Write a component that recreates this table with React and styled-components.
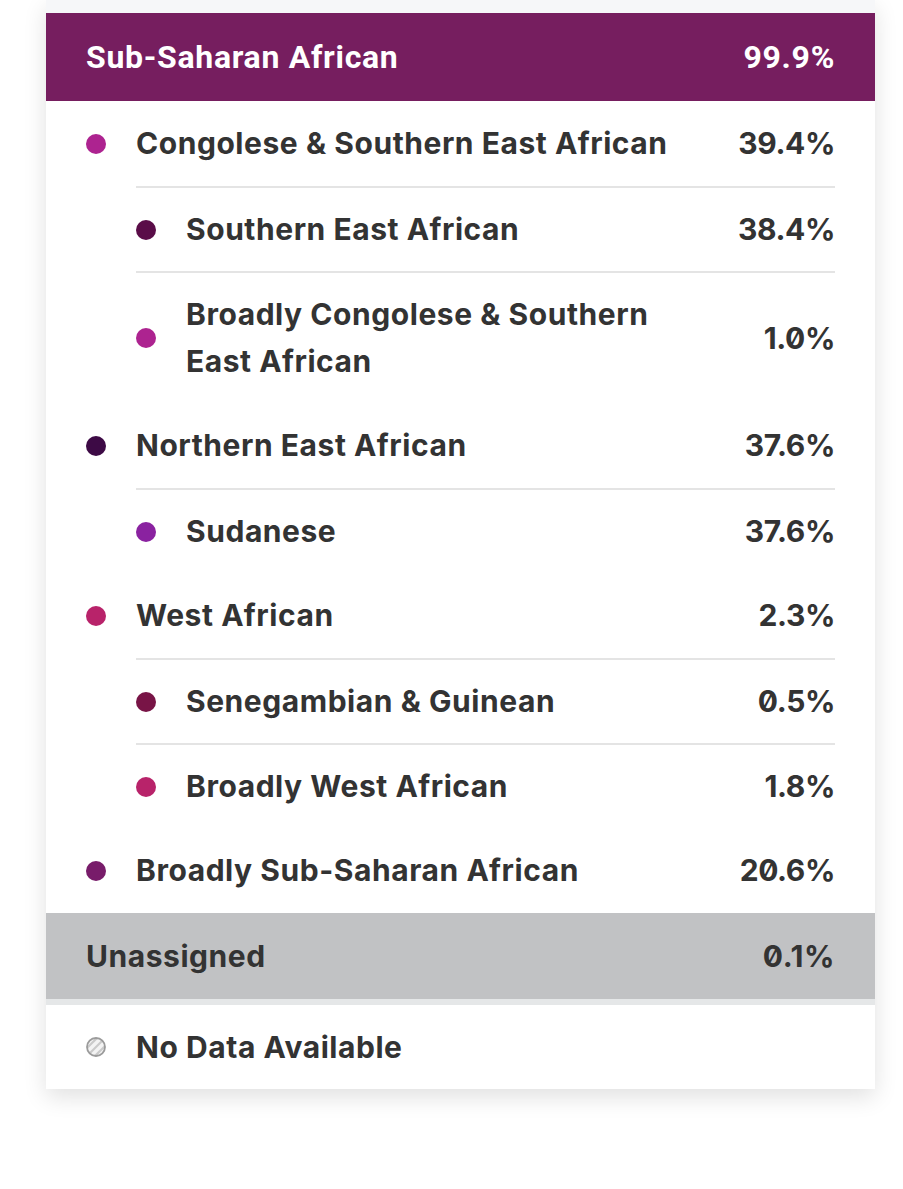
import React from "react";
import styled, { createGlobalStyle } from "styled-components";

const Global = createGlobalStyle`
  html, body { margin: 0; padding: 0; background: #ffffff; }
  body { font-family: Inter, "Open Sans", sans-serif; }
`;

const Page = styled.div`
  padding: 0 28px 100px 46px;
`;

const Card = styled.div`
  width: 829px;
  background: #ffffff;
  box-shadow: 0 8px 22px rgba(0, 0, 0, 0.12);
`;

const TopStrip = styled.div`
  height: 13px;
  background: #f6f7f9;
`;

const Header = styled.div`
  height: 88px;
  background: #761e5f;
  color: #ffffff;
  display: flex;
  align-items: center;
  justify-content: space-between;
  padding: 0 40px;
  font-family: Roboto, "Liberation Sans", sans-serif;
  font-weight: 700;
  font-size: 32px;
  letter-spacing: 0.7px;
`;

const Body = styled.div`
  padding: 0 40px;
`;

const Row = styled.div`
  display: flex;
  align-items: center;
  padding: ${(p) => (p.$child ? "18px 0" : "19px 0")};
  border-top: ${(p) => (p.$child ? "2px solid #e4e4e4" : "none")};
  margin-left: ${(p) => (p.$child ? "50px" : "0")};
  color: #333333;
  font-weight: 700;
  font-size: 30px;
  line-height: 47px;
  letter-spacing: 0.55px;
  font-feature-settings: "zero" 1;
`;

const Dot = styled.span`
  flex: 0 0 20px;
  width: 20px;
  height: 20px;
  border-radius: 50%;
  background: ${(p) => p.$color};
  margin-right: 30px;
`;

const Label = styled.span`
  flex: 1;
  padding-right: 60px;
`;

const Pct = styled.span`
  flex: 0 0 auto;
  text-align: right;
  letter-spacing: -0.4px;
`;

const Unassigned = styled.div`
  height: 86px;
  background: #c1c2c4;
  display: flex;
  align-items: center;
  justify-content: space-between;
  padding: 0 40px;
  color: #333333;
  font-weight: 700;
  font-size: 30px;
  letter-spacing: 0.55px;
  font-feature-settings: "zero" 1;
`;

const Gap = styled.div`
  height: 6px;
  background: #e5e7e8;
`;

const NoDataRow = styled.div`
  height: 84px;
  display: flex;
  align-items: center;
  padding: 0 40px;
  color: #333333;
  font-weight: 700;
  font-size: 30px;
  letter-spacing: 0.55px;
`;

const IconWrap = styled.span`
  display: inline-flex;
  width: 20px;
  height: 20px;
  margin-right: 30px;
`;

const NoDataIcon = () => (
  <IconWrap>
    <svg width="20" height="20" viewBox="0 0 20 20">
      <defs>
        <clipPath id="c">
          <circle cx="10" cy="10" r="9" />
        </clipPath>
      </defs>
      <circle cx="10" cy="10" r="9" fill="#f3f3f3" />
      <g clipPath="url(#c)" stroke="#cacaca" strokeWidth="2.2">
        <line x1="-2" y1="14" x2="14" y2="-2" />
        <line x1="2" y1="18" x2="18" y2="2" />
        <line x1="6" y1="22" x2="22" y2="6" />
      </g>
      <circle cx="10" cy="10" r="9" fill="none" stroke="#9b9b9b" strokeWidth="1.8" />
    </svg>
  </IconWrap>
);

const groups = [
  {
    name: "Congolese & Southern East African",
    pct: "39.4%",
    color: "#ad2390",
    children: [
      { name: "Southern East African", pct: "38.4%", color: "#5a0d48" },
      {
        name: "Broadly Congolese & Southern East African",
        pct: "1.0%",
        color: "#ad2390",
      },
    ],
  },
  {
    name: "Northern East African",
    pct: "37.6%",
    color: "#3d0a45",
    children: [{ name: "Sudanese", pct: "37.6%", color: "#8a22a0" }],
  },
  {
    name: "West African",
    pct: "2.3%",
    color: "#b8236a",
    children: [
      { name: "Senegambian & Guinean", pct: "0.5%", color: "#781446" },
      { name: "Broadly West African", pct: "1.8%", color: "#b8236a" },
    ],
  },
  {
    name: "Broadly Sub-Saharan African",
    pct: "20.6%",
    color: "#781c6a",
    children: [],
  },
];

export default function App() {
  return (
    <>
      <Global />
      <Page>
        <Card>
          <TopStrip />
          <Header>
            <span>Sub-Saharan African</span>
            <span>99.9%</span>
          </Header>
          <Body>
            {groups.map((g) => (
              <React.Fragment key={g.name}>
                <Row>
                  <Dot $color={g.color} />
                  <Label>{g.name}</Label>
                  <Pct>{g.pct}</Pct>
                </Row>
                {g.children.map((c) => (
                  <Row $child key={c.name}>
                    <Dot $color={c.color} />
                    <Label>{c.name}</Label>
                    <Pct>{c.pct}</Pct>
                  </Row>
                ))}
              </React.Fragment>
            ))}
          </Body>
          <Unassigned>
            <span>Unassigned</span>
            <span>0.1%</span>
          </Unassigned>
          <Gap />
          <NoDataRow>
            <NoDataIcon />
            <span>No Data Available</span>
          </NoDataRow>
        </Card>
      </Page>
    </>
  );
}
